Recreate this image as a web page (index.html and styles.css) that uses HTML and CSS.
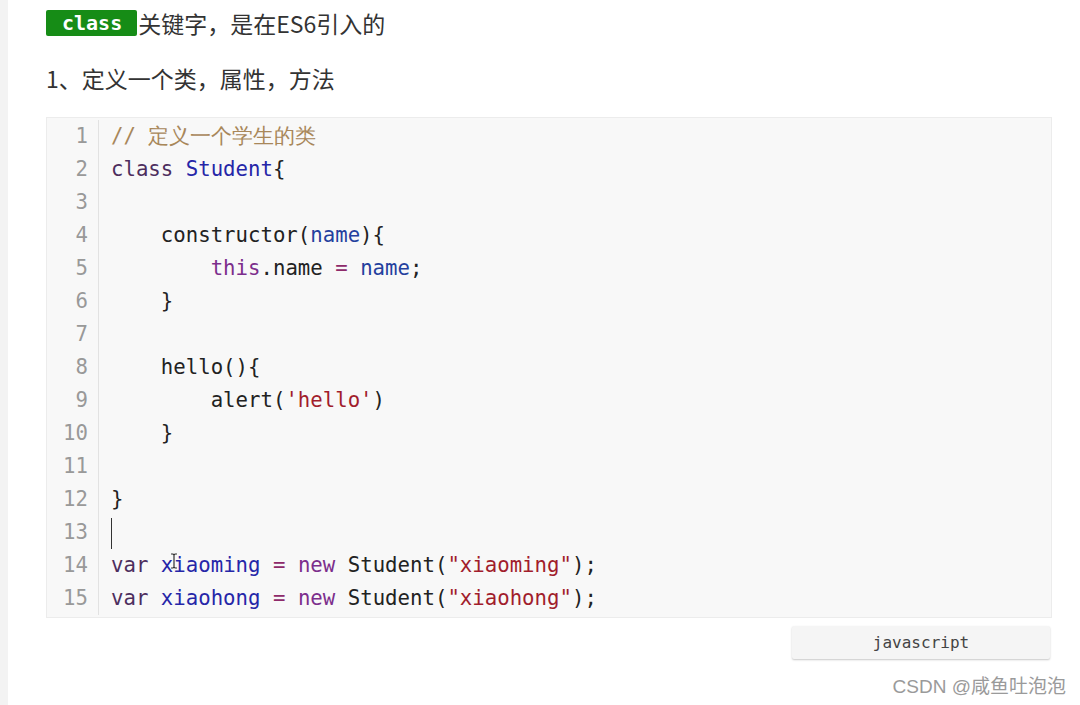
FILE: index.html
```html
<!DOCTYPE html>
<html lang="zh">
<head>
<meta charset="utf-8">
<link rel="stylesheet" href="styles.css">
</head>
<body>
<div class="page">
  <div class="title"><code class="badge">class</code><span>关键字，是在ES6引入的</span></div>
  <div class="sub">1、定义一个类，属性，方法</div>
  <div class="codeblock">
    <div class="row"><span class="ln">1</span><span class="code"><span class="cm">// 定义一个学生的类</span></span></div>
    <div class="row"><span class="ln">2</span><span class="code"><span class="kw">class</span> <span class="def">Student</span>{</span></div>
    <div class="row"><span class="ln">3</span><span class="code"></span></div>
    <div class="row"><span class="ln">4</span><span class="code">    constructor(<span class="var">name</span>){</span></div>
    <div class="row"><span class="ln">5</span><span class="code">        <span class="kw2">this</span>.name <span class="op">=</span> <span class="var">name</span>;</span></div>
    <div class="row"><span class="ln">6</span><span class="code">    }</span></div>
    <div class="row"><span class="ln">7</span><span class="code"></span></div>
    <div class="row"><span class="ln">8</span><span class="code">    hello(){</span></div>
    <div class="row"><span class="ln">9</span><span class="code">        alert(<span class="str">'hello'</span>)</span></div>
    <div class="row"><span class="ln">10</span><span class="code">    }</span></div>
    <div class="row"><span class="ln">11</span><span class="code"></span></div>
    <div class="row"><span class="ln">12</span><span class="code">}</span></div>
    <div class="row"><span class="ln">13</span><span class="code"><span class="caret"></span></span></div>
    <div class="row"><span class="ln">14</span><span class="code"><span class="kw">var</span> <span class="def">x<span class="ibeam"><svg width="10" height="16" viewBox="0 0 10 16"><path d="M2 1h2l1 1 1-1h2M5 2v12M2 15h2l1-1 1 1h2" fill="none" stroke="#333" stroke-width="1.2"/></svg></span>iaoming</span> <span class="op">=</span> <span class="kw2">new</span> Student(<span class="str">"xiaoming"</span>);</span></div>
    <div class="row"><span class="ln">15</span><span class="code"><span class="kw">var</span> <span class="def">xiaohong</span> <span class="op">=</span> <span class="kw2">new</span> Student(<span class="str">"xiaohong"</span>);</span></div>
  </div>
  <div class="langbar"><div class="lang">javascript</div></div>
  <div class="watermark">CSDN @咸鱼吐泡泡</div>
</div>
</body>
</html>
```

FILE: styles.css
```css
html, body {
  margin: 0;
  padding: 0;
  background: #fff;
}
.page {
  position: relative;
  box-sizing: border-box;
  width: 1080px;
  height: 705px;
  border-left: 8px solid #f3f3f3;
  padding: 0 0 0 38px;
  font-family: "Noto Sans CJK SC", "Noto Sans", sans-serif;
  color: #333;
  overflow: hidden;
}
.title {
  height: 46px;
  display: flex;
  align-items: center;
  font-size: 23px;
}
.badge {
  display: inline-block;
  background: #168c16;
  color: #fff;
  font-family: "DejaVu Sans Mono", monospace;
  font-size: 20px;
  font-weight: bold;
  line-height: 26px;
  height: 26px;
  padding: 0 15px 0 16px;
  border-radius: 2px;
  margin-right: 1px;
}
.sub {
  margin-top: 10px;
  height: 44px;
  line-height: 44px;
  font-size: 23px;
}
.codeblock {
  margin-top: 17px;
  width: 1006px;
  box-sizing: border-box;
  border: 1px solid #ececec;
  background: #f8f8f8;
  padding: 2px 0;
  font-family: "DejaVu Sans Mono", monospace;
  font-size: 20.7px;
}
.row {
  display: flex;
  height: 33px;
  line-height: 33px;
}
.ln {
  width: 41px;
  flex: none;
  text-align: right;
  padding-right: 10px;
  border-right: 1px solid #e2e2e2;
  color: #999;
}
.code {
  padding-left: 12px;
  white-space: pre;
  color: #222;
}
.cm { color: #a8875a; }
.kw { color: #4d2e5e; }
.kw2 { color: #7c2e8c; }
.def { color: #2626a8; }
.var { color: #24409e; }
.op { color: #8e2a6a; }
.str { color: #a11d2c; }
.caret {
  display: inline-block;
  width: 0;
  height: 31px;
  border-left: 1.5px solid #333;
  vertical-align: middle;
}
.ibeam {
  position: relative;
}
.ibeam svg {
  position: absolute;
  left: -4px;
  top: 0;
}
.langbar {
  display: flex;
  justify-content: flex-end;
  width: 1004px;
  margin-top: 8px;
}
.lang {
  width: 258px;
  height: 33px;
  line-height: 33px;
  text-align: center;
  background: #f5f5f5;
  border-radius: 2px;
  box-shadow: 0 1px 2px rgba(0,0,0,0.22);
  font-family: "DejaVu Sans Mono", monospace;
  font-size: 16px;
  color: #444;
}
.watermark {
  position: absolute;
  right: 14px;
  top: 674px;
  font-size: 19px;
  color: #9a9a9a;
  line-height: 26px;
  font-family: "Liberation Sans", "Noto Sans CJK SC", sans-serif;
}
```
